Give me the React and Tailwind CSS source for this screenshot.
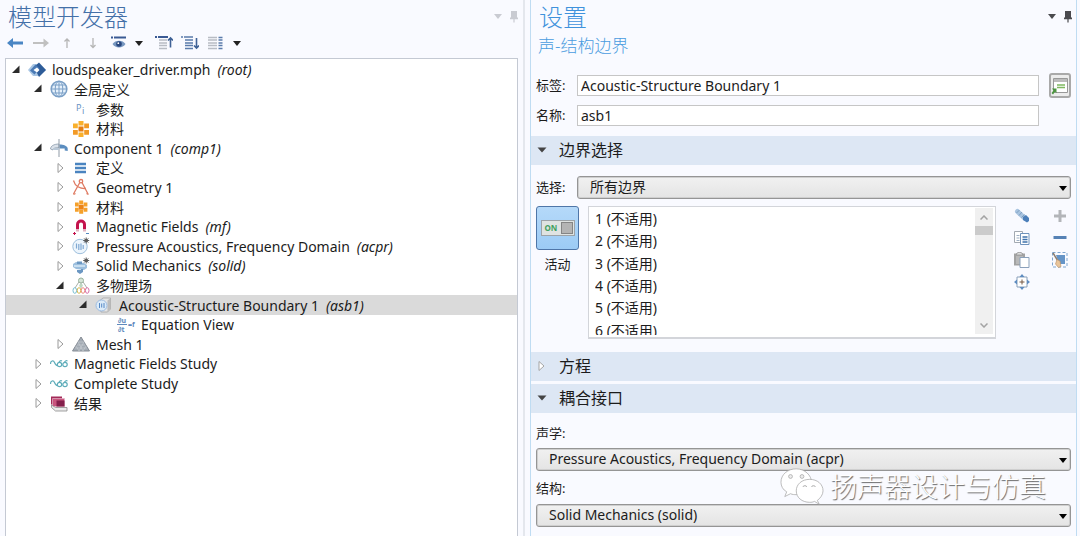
import React, { useState } from 'react'

const GlobeIcon = () => (
    <svg viewBox="0 0 18 18" className="w-full h-full" fill="none" stroke="#7a9fc6">
        <circle cx="9" cy="9" r="7.8" strokeWidth="1.6" fill="#e6f1fb" />
        <ellipse cx="9" cy="9" rx="3.8" ry="7.8" />
        <path d="M9 1v16M1 9h16M2.6 5h12.8M2.6 13h12.8" />
    </svg>
)

const RootIcon = () => (
    <svg viewBox="0 0 18 18" className="w-full h-full">
        <path d="M0 9l5-6h6l7 6-7 6H5z" fill="#a9c6e4" />
        <path d="M6 6l5-4.5L18 9l-7 7z" fill="#2e5c98" />
        <path d="M2 9.500l5.500-6 4 4-5 6z" fill="#4a7ab5" />
        <path d="M5.500 9l3.500-2.500 2.500 2.500L9 11.500z" fill="#fff" />
    </svg>
)

const ParamIcon = () => (
    <svg viewBox="0 0 18 18" className="w-full h-full" fontFamily="Noto Sans, sans-serif" fill="#6a94c4">
        <text x="4" y="11" fontSize="9">P</text>
        <text x="10" y="14" fontSize="9">i</text>
    </svg>
)

const MaterialIcon = () => (
    <svg viewBox="0 0 18 18" className="w-full h-full">
        <path d="M6.500 1h5v4.500h-5zM1 3.500h4.800v4.700H1zM6.500 12.500h5V17h-5z" fill="#f9b02c" />
        <path d="M12.200 3.500H17v4.700h-4.800zM1 10h4.800v4.700H1zM12.200 10H17v4.700h-4.800z" fill="#f29a26" />
        <path d="M6.500 6.500h5v5h-5z" fill="#e57d12" />
    </svg>
)

const SmallMaterialIcon = () => (
    <svg viewBox="0 0 18 18" className="w-full h-full">
        <path d="M7.200 2.500h4v3.800h-4zM3 4.500h3.700v4H3zM7.200 12h4v3.800h-4zM11.700 4.500h3.700v4h-3.700zM3 9.700h3.700v4H3zM11.700 9.700h3.700v4h-3.700z" fill="#f5a02a" />
        <path d="M6.700 6.700h5v5h-5z" fill="#ec8316" />
    </svg>
)

const ComponentIcon = () => (
    <svg viewBox="0 0 18 18" className="w-full h-full">
        <path d="M9 5c-5 0-8.500 2-8.500 5l2.500 1c0-1.500 2-2.500 6-2.500z" fill="#dbe2ea" stroke="#8d9cac" strokeWidth=".8" />
        <path d="M9.500 5.500c4 0 8 1.500 8.200 4V12l-3-.5v-2H9.500z" fill="#5b8dbf" />
        <path d="M9 0v18" stroke="#8f9aa6" />
        <path d="M3 9h6v2H4z" fill="#b8c7d6" />
    </svg>
)

const DefinitionIcon = () => (
    <svg viewBox="0 0 18 18" className="w-full h-full">
        <path d="M3 5h11M3 9h11M3 13h11" stroke="#4a84c0" strokeWidth="2.400" />
    </svg>
)

const GeometryIcon = () => (
    <svg viewBox="0 0 18 18" className="w-full h-full" fill="none" stroke="#df7a62" strokeWidth="1.300">
        <path d="M1.500 16L7.800 4.500M10 4.500L16 16M1.500 2.500C3 8 8 11 14 10.500" />
        <circle cx="9" cy="3.200" r="1.700" />
        <path d="M1.500 16.500l2-1M16.500 16.500l-2-1" />
    </svg>
)

const MagnetIcon = () => (
    <svg viewBox="0 0 18 18" className="w-full h-full">
        <path d="M5.500 13V6.500a3.500 3.500 0 0 1 7 0V13" fill="none" stroke="#c4134d" strokeWidth="3" />
        <path d="M4 11h3v2.500H4zM11 11h3v2.500h-3z" fill="#e3b3c1" />
        <path d="M1 15.500h3M2.500 14v3" stroke="#c4134d" />
        <path d="M14 15.500h3" stroke="#5589c0" />
    </svg>
)

const Star = () => (
    <g>
        <circle cx="14.200" cy="3.500" r="1.800" fill="#555" />
        <path d="M14.200 .500v6M11.200 3.500h6M12.100 1.400l4.200 4.200M16.300 1.400l-4.200 4.200" stroke="#5d5d5d" />
    </g>
)

const AcousticsIcon = () => (
    <svg viewBox="0 0 18 18" className="w-full h-full" fill="none">
        <circle cx="8" cy="9.500" r="7.200" stroke="#9dbfdd" fill="#edf5fc" />
        <path d="M4.500 6.500v5M6.800 7v6M9 6.500v6.500M11.200 8v4" stroke="#7fa8d2" strokeWidth="1.200" />
        <Star />
    </svg>
)

const SolidIcon = () => (
    <svg viewBox="0 0 18 18" className="w-full h-full">
        <path d="M1 7l3-2 8 1 3 2v3l-3 2-8-1-3-2z" fill="#9cbedd" />
        <path d="M5 4.500h5v2.500H5zM5 13h4v-1h2v3l-3 2-3-2z" fill="#6b97c2" />
        <path d="M2 8h11v2H2z" fill="#c9dff0" />
        <Star />
    </svg>
)

const MultiphysicsIcon = () => (
    <svg viewBox="0 0 18 18" className="w-full h-full" fill="none">
        <path d="M8.500 2.500L3 11M9 3v8M9.500 2.500L15 11" stroke="#a8b0a8" />
        <circle cx="9" cy="3.500" r="2.500" fill="#d6e5d8" stroke="#98b29c" />
        <circle cx="9" cy="8.500" r="1.800" fill="#bcd8c2" />
        <ellipse cx="2.800" cy="13.500" rx="1.800" ry="2.800" stroke="#74bdd2" />
        <ellipse cx="7" cy="13.500" rx="1.800" ry="2.800" stroke="#d8b84e" />
        <ellipse cx="11" cy="13.500" rx="1.800" ry="2.800" stroke="#ec8d80" />
        <ellipse cx="15.200" cy="13.500" rx="1.800" ry="2.800" stroke="#d76aa5" />
    </svg>
)

const BoundaryIcon = () => (
    <svg viewBox="0 0 18 18" className="w-full h-full">
        <path d="M5 4.500L8 2h7.500v11l-3 3H6z" fill="#e5e5e5" stroke="#a5a5a5" strokeWidth=".8" />
        <path d="M12.500 4.500L15.500 2v11l-3 3z" fill="#bcbcbc" />
        <circle cx="6.500" cy="9.500" r="5.500" fill="#dcebf8" stroke="#9dbbe0" />
        <path d="M4.500 7v5M6.700 7.500v4M9 7v5" stroke="#5588c6" />
    </svg>
)

const EquationIcon = () => (
    <svg viewBox="0 0 18 18" className="w-full h-full overflow-visible" fontFamily="Noto Sans, sans-serif" fontWeight="700" fill="#5f8abd">
        <text x="1" y="7" fontSize="7">∂u</text>
        <text x="1" y="16" fontSize="7">∂t</text>
        <path d="M0 8.500h10" stroke="#5f8abd" />
        <text x="11" y="11" fontSize="7">=f</text>
    </svg>
)

const MeshIcon = () => (
    <svg viewBox="0 0 18 18" className="w-full h-full">
        <path d="M9 2l8.500 14H.500z" fill="#a3abb4" stroke="#858c95" />
        <path d="M6 7h6M4.500 10h9M3 13h12M6 7l5 9M12 7l-5 9M4 11l3 5M14 11l-3 5" stroke="#c9ced4" strokeWidth=".6" />
    </svg>
)

const StudyIcon = () => (
    <svg viewBox="0 0 18 18" className="w-full h-full" fill="none" stroke="#5fadba" strokeWidth="1.200">
        <path d="M.500 9c0-3.500 3-4 4-1.500s1.500 3.500 3.500 3" />
        <circle cx="9.500" cy="9.500" r="2.200" />
        <circle cx="15" cy="9.500" r="2.200" />
        <path d="M9 7.300c1-1.800 2-1.800 3-1.300M14.500 7.300c.8-1.800 2-1.800 3-1.300" />
    </svg>
)

const ResultsIcon = () => (
    <svg viewBox="0 0 18 18" className="w-full h-full">
        <path d="M1 2.500h11v8H1z" fill="#a32a58" />
        <path d="M2.500 4.500h12v8h-12z" fill="#c8557e" stroke="#e3b4c6" strokeWidth=".7" />
        <path d="M6.500 6.500h8v6h-8z" fill="#84204c" />
        <path d="M1.500 11l4 2.500H17V17H5.500l-4-3.500z" fill="#ececec" stroke="#8b8b8b" strokeWidth=".8" />
    </svg>
)

const nodes = [
    { level: 0, state: 'open', icon: RootIcon, label: 'loudspeaker_driver.mph', tag: '(root)' },
    { level: 1, state: 'open', icon: GlobeIcon, label: '全局定义' },
    { level: 2, icon: ParamIcon, label: '参数' },
    { level: 2, icon: MaterialIcon, label: '材料' },
    { level: 1, state: 'open', icon: ComponentIcon, label: 'Component 1', tag: '(comp1)' },
    { level: 2, state: 'closed', icon: DefinitionIcon, label: '定义' },
    { level: 2, state: 'closed', icon: GeometryIcon, label: 'Geometry 1' },
    { level: 2, state: 'closed', icon: SmallMaterialIcon, label: '材料' },
    { level: 2, state: 'closed', icon: MagnetIcon, label: 'Magnetic Fields', tag: '(mf)' },
    { level: 2, state: 'closed', icon: AcousticsIcon, label: 'Pressure Acoustics, Frequency Domain', tag: '(acpr)' },
    { level: 2, state: 'closed', icon: SolidIcon, label: 'Solid Mechanics', tag: '(solid)' },
    { level: 2, state: 'open', icon: MultiphysicsIcon, label: '多物理场' },
    { level: 3, state: 'open', icon: BoundaryIcon, label: 'Acoustic-Structure Boundary 1', tag: '(asb1)', selected: true },
    { level: 4, icon: EquationIcon, label: 'Equation View' },
    { level: 2, state: 'closed', icon: MeshIcon, label: 'Mesh 1' },
    { level: 1, state: 'closed', icon: StudyIcon, label: 'Magnetic Fields Study' },
    { level: 1, state: 'closed', icon: StudyIcon, label: 'Complete Study' },
    { level: 1, state: 'closed', icon: ResultsIcon, label: '结果' },
]

const indents = ['pl-0.5', 'pl-6', 'pl-[46px]', 'pl-[69px]', 'pl-[91px]']

const Expander = ({ state, label }) => (
    <button type="button" aria-label={label} className="w-4 h-4 shrink-0">
        <svg viewBox="0 0 16 16" className="w-4 h-4">
            {state === 'open'
                ? <path d="M11.500 3.500V11H4z" fill="#2b2b2b" />
                : <path d="M6 3.500v9l5-4.500z" fill="#fff" stroke="#9a9a9a" />}
        </svg>
    </button>
)

const TreeRow = ({ node }) => {
    const Icon = node.icon
    return (
        <li className={`flex items-center min-h-0 ${indents[node.level]} ${node.selected ? 'bg-[#dadada]' : ''}`}>
            {node.state ? <Expander state={node.state} label={node.label} /> : <span className="w-4 shrink-0" />}
            <span className="w-[18px] h-[18px] ml-1 mr-1.5 shrink-0"><Icon /></span>
            <span className="whitespace-nowrap">{node.label}</span>
            {node.tag && <em className="ml-[7px] whitespace-nowrap">{node.tag}</em>}
        </li>
    )
}

const Caret = ({ className }) => (
    <svg viewBox="0 0 8 5" className={`w-2 h-[5px] ${className}`} fill="currentColor"><path d="M0 0h8L4 5z" /></svg>
)

const Pin = () => (
    <svg viewBox="0 0 8 12" className="w-2 h-3" fill="currentColor"><path d="M1 0h6v6.500h1v1.800H4.600v3.200H3.400V8.300H0V6.500h1z" /></svg>
)

const WindowButtons = ({ className }) => (
    <div className={`flex items-center gap-2 ${className}`}>
        <button type="button" aria-label="菜单"><Caret className="block" /></button>
        <button type="button" aria-label="固定"><Pin /></button>
    </div>
)

const Tool = ({ label, wide, children }) => (
    <button type="button" aria-label={label} className={`h-4 shrink-0 ${wide ? 'w-[18px]' : 'w-4'}`}>
        <svg viewBox={wide ? '0 0 18 16' : '0 0 16 16'} className="w-full h-full" fill="none">{children}</svg>
    </button>
)

const Toolbar = () => (
    <div className="flex items-center h-5 pl-[7px]">
        <div className="flex gap-2.5">
            <Tool label="后退"><path d="M0 8l6-5v3.500h10v3H6V13z" fill="#4a86c4" /></Tool>
            <Tool label="前进"><path d="M16 8l-5.500-4.500V7H0v2h10.500v3.500z" fill="#c0c0c0" /></Tool>
            <Tool label="上移"><path d="M8 13V4M5.500 6.500L8 4l2.500 2.500" stroke="#b5b5b5" strokeWidth="1.300" /></Tool>
            <Tool label="下移"><path d="M8 3v9.500M5.500 10L8 12.500l2.500-2.500" stroke="#b5b5b5" strokeWidth="1.300" /></Tool>
            <Tool label="显示">
                <path d="M0 2.500h2M3 2.500h12" stroke="#3a5a94" strokeWidth="2" />
                <path d="M1.500 9C4 4.500 12 4.500 14.500 9 12 13.500 4 13.500 1.500 9z" fill="#7797c0" />
                <circle cx="8" cy="9" r="2.800" fill="#29477e" />
                <circle cx="7.300" cy="8.200" r=".9" fill="#fff" />
            </Tool>
        </div>
        <button type="button" aria-label="显示选项" className="ml-2"><Caret className="text-[#222]" /></button>
        <div className="flex gap-2 ml-3">
            <Tool label="全部折叠" wide>
                <path d="M0 2h2M3 2h10" stroke="#3a5a94" strokeWidth="1.800" />
                <path d="M4 5h8M4 8h8M4 10.500h8M4 13.500h8" stroke="#b8bcc4" strokeWidth="1.500" />
                <path d="M15.500 12.500V3M13 5.500L15.500 3 18 5.500" stroke="#3f6296" strokeWidth="1.600" />
            </Tool>
            <Tool label="全部展开" wide>
                <path d="M0 2h2M3 2h9M4 5h8M4 8h8M4 10.500h8M4 13.500h8" stroke="#5a7bab" strokeWidth="1.600" />
                <path d="M15.500 3v10M13 10.500l2.500 2.500 2.500-2.500" stroke="#3f6296" strokeWidth="1.600" />
            </Tool>
            <Tool label="节点文本" wide>
                <path d="M1 2.500h9M1 5h9M1 8h9M1 10.500h9M1 13.500h9" stroke="#b8bcc4" strokeWidth="1.500" />
                <path d="M11.500 2.500h4M11.500 5h4M11.500 8h4M11.500 10.500h4M11.500 13.500h4" stroke="#5a7bab" strokeWidth="1.500" />
            </Tool>
        </div>
        <button type="button" aria-label="文本选项" className="ml-2"><Caret className="text-[#222]" /></button>
    </div>
)

const ModelBuilder = () => (
    <section className="flex flex-col pl-[5px] pr-[5px] border-r-2 border-[#e4e7ed]">
        <header className="flex items-center justify-between h-[33px] pl-[3px]">
            <h1 className="text-[24px] leading-8 font-light text-[#4470a8]">模型开发器</h1>
            <WindowButtons className="text-[#c9cbd2]" />
        </header>
        <div className="-ml-[5px]"><Toolbar /></div>
        <div className="mt-[5px] grow bg-white border border-b-0 border-[#c4c9d3]">
            <ul className="grid auto-rows-fr h-[354px] pt-px leading-[19px]">
                {nodes.map((node, i) => <TreeRow key={i} node={node} />)}
            </ul>
        </div>
    </section>
)

const SectionHeader = ({ open, children }) => (
    <h2>
        <button type="button" aria-expanded={open} className="flex items-center w-full h-[29px] pl-1.5 pb-px bg-[#dde7f4] text-[16px] leading-6">
            <svg viewBox="0 0 10 10" className="w-2.5 h-2.5 mr-3">
                {open
                    ? <path d="M.500 2.500h9L5 7.500z" fill="#444" />
                    : <path d="M2 .500v9L7 5z" fill="#fff" stroke="#a5a5a5" />}
            </svg>
            {children}
        </button>
    </h2>
)

const Dropdown = ({ id, value }) => (
    <div className="relative grow">
        <select id={id} className="block w-full h-[23px] pl-3 pr-6 pb-px appearance-none rounded-[3px] border border-[#959595] inset-ring inset-ring-[#cfcfcf] bg-linear-to-b from-[#f1f1f1] to-[#e4e4e4] leading-5">
            <option>{value}</option>
        </select>
        <Caret className="absolute right-1 top-2.5 text-black pointer-events-none" />
    </div>
)

const Field = ({ id, label, value }) => (
    <div className="flex items-center">
        <label htmlFor={id} className="w-[41px] text-[13px] whitespace-nowrap">{label}</label>
        <input id={id} defaultValue={value} className="grow min-w-0 h-[21px] pl-[3px] pb-px bg-white border border-[#c6c6c6] leading-[19px]" />
    </div>
)

const SideButton = ({ label, children }) => (
    <button type="button" aria-label={label} className="w-4 h-4">
        <svg viewBox="0 0 16 16" className="w-4 h-4" fill="none">{children}</svg>
    </button>
)

const SelectionTools = () => (
    <div className="flex gap-[22px] mt-0.5 ml-auto mr-[3px]">
        <div className="flex flex-col gap-1.5">
            <SideButton label="创建选择">
                <path d="M3.500 3.500l7 6.500" stroke="#a9c4e0" strokeWidth="5" strokeLinecap="round" />
                <path d="M2.500 5l3-3M5 7.500l3-3.500M7.500 9.500l3-3" stroke="#7f9fc2" />
                <path d="M9 9l3-2 3 3v3l-2 1.500-4-2.500z" fill="#4c7fba" />
            </SideButton>
            <SideButton label="复制选择">
                <path d="M.500 1.500h8v11h-8z" stroke="#a3a9b1" fill="#fff" />
                <path d="M2.500 5.500h3M2.500 8h3M2.500 10.500h3" stroke="#9eafc3" />
                <path d="M6.500 3.500h8.500v11H6.500z" stroke="#6f93bc" fill="#fff" />
                <path d="M8.500 7h5M8.500 9.500h5M8.500 12h5" stroke="#3e71ab" strokeWidth="1.400" />
            </SideButton>
            <SideButton label="粘贴选择">
                <path d="M0 1.500h11v12H0z" fill="#a2a2a2" />
                <path d="M2.500 2.500c0-3 6-3 6 0" stroke="#8c8c8c" fill="#ddd" />
                <path d="M2 4h7v8H2z" fill="#b9b9b9" />
                <path d="M6 5.500h9v10H6z" stroke="#8ba1bb" fill="#fff" />
            </SideButton>
            <SideButton label="缩放到所选">
                <path d="M3 3h10v10H3z" stroke="#8aa0ba" fill="#fff" />
                <path d="M8 5.500v5M5.500 8h5" stroke="#765943" />
                <path d="M8 0l2.500 3h-5zM8 16l2.500-3h-5zM0 8l3-2.500v5zM16 8l-3-2.500v5z" fill="#5f8cc0" />
            </SideButton>
        </div>
        <div className="flex flex-col gap-1.5">
            <SideButton label="添加"><path d="M8 2v12M2 8h12" stroke="#b3b5b9" strokeWidth="3" /></SideButton>
            <SideButton label="移除"><path d="M1.500 7.500h13" stroke="#5682b5" strokeWidth="3" /></SideButton>
            <SideButton label="清除选择">
                <path d="M.500 .500h14.500v14.500H.500z" stroke="#7ea6d0" strokeDasharray="3 2" />
                <path d="M4 3h9v9H7z" fill="#6594c7" />
                <path d="M1 1l5 8" stroke="#8b7d70" strokeWidth="1.500" />
                <path d="M5 7.500l3 1.500 1 5.500-2.500 1L3.500 12z" fill="#e9c59b" stroke="#b58c61" strokeWidth=".6" />
            </SideButton>
        </div>
    </div>
)

const boundaries = [1, 2, 3, 4, 5, 6]

const BoundaryList = () => (
    <div className="flex justify-between grow h-[133px] ml-[9px] pl-1.5 pr-0.5 pt-px pb-[3px] bg-white border border-b-2 border-[#d3d5da] overflow-hidden">
        <div className="h-[127px] overflow-hidden">
            <ul className="grid auto-rows-fr h-[134px] leading-[22px]">
                {boundaries.map((n) => <li key={n}>{n} (不适用)</li>)}
            </ul>
        </div>
        <div className="flex flex-col w-[18px] bg-[#f0f0f0]">
            <button type="button" aria-label="向上滚动" className="h-[18px] flex items-center justify-center">
                <svg viewBox="0 0 8 5" className="w-2 h-[5px]" fill="none" stroke="#a3a3a3" strokeWidth="1.500"><path d="M.500 4.500L4 1l3.500 3.500" /></svg>
            </button>
            <div className="h-[9px] bg-[#cbcbcb]" />
            <button type="button" aria-label="向下滚动" className="mt-auto h-[18px] flex items-center justify-center">
                <svg viewBox="0 0 8 5" className="w-2 h-[5px]" fill="none" stroke="#a3a3a3" strokeWidth="1.500"><path d="M.500 .500L4 4 7.500 .500" /></svg>
            </button>
        </div>
    </div>
)

const ActiveToggle = () => {
    const [active, setActive] = useState(true)
    return (
        <div className="flex flex-col items-center w-[43px] shrink-0">
            <button
                type="button"
                aria-pressed={active}
                aria-labelledby="active-label"
                onClick={() => setActive(!active)}
                className="flex items-center justify-center w-[43px] h-11 rounded-[3px] border border-[#4f76a8] bg-linear-to-b from-[#b5d9f9] to-[#9ccbf5]"
            >
                <span className="flex items-center justify-between w-[34px] h-4 pl-[3px] pr-px border border-[#9da3a8] bg-[#dfe3e2]">
                    <span className="text-[8px] leading-3 font-bold text-[#3fa060]">{active ? 'ON' : 'OFF'}</span>
                    <span className="w-3 h-3 border border-[#858585] bg-[#b4b4b4]" />
                </span>
            </button>
            <span id="active-label" className="mt-1 text-[13px] leading-5">活动</span>
        </div>
    )
}

const Settings = () => (
    <section className="flex flex-col ml-[5px] mr-[3px] min-w-0 border-x border-[#bfdcf2]">
        <header className="flex items-center justify-between h-[33px] pl-2 pr-1">
            <h1 className="text-[24px] leading-8 font-light text-[#3f92dc]">设置</h1>
            <WindowButtons className="text-[#4a4a4e]" />
        </header>
        <p className="pl-[7px] text-[17px] leading-[26px] font-light text-[#4a9ce0]">声-结构边界</p>

        <div className="flex gap-2.5 mt-3.5 pl-[5px] pr-[5px] pb-2.5">
            <div className="flex flex-col gap-[9px] grow mt-0.5">
                <Field id="label" label="标签:" value="Acoustic-Structure Boundary 1" />
                <Field id="name" label="名称:" value="asb1" />
            </div>
            <button type="button" aria-label="转到源" className="flex items-center justify-center w-[22px] h-[25px] rounded-[3px] border-2 border-[#a9a9a9] bg-[#ececec]">
                <svg viewBox="0 0 18 18" className="w-[18px] h-[18px]" fill="none">
                    <path d="M2.500 1.500h14v14h-14z" fill="#fff" stroke="#999" />
                    <path d="M3 2h13v3H3z" fill="#bcbcbc" />
                    <path d="M6 8h8M6 10.500h8" stroke="#7fb960" strokeWidth="1.500" />
                    <path d="M1 11.500h4.500V16L4 14.800 2 17.500.500 16 2.500 13.500z" fill="#4c9540" />
                </svg>
            </button>
        </div>

        <SectionHeader open>边界选择</SectionHeader>
        <div className="flex items-center mt-[11px] pl-[5px] pr-[5px]">
            <label htmlFor="selection" className="w-[41px] text-[13px] whitespace-nowrap">选择:</label>
            <Dropdown id="selection" value="所有边界" />
        </div>
        <div className="flex mt-[7px] pl-[5px] pr-[5px] mb-[13px]">
            <ActiveToggle />
            <BoundaryList />
            <div className="flex w-[75px] shrink-0"><SelectionTools /></div>
        </div>

        <SectionHeader open={false}>方程</SectionHeader>
        <div className="h-[3px]" />
        <SectionHeader open>耦合接口</SectionHeader>
        <div className="flex flex-col pl-[5px] pr-[5px] pt-2.5">
            <label htmlFor="acoustics" className="text-[13px] leading-5 mb-[5px]">声学:</label>
            <Dropdown id="acoustics" value="Pressure Acoustics, Frequency Domain (acpr)" />
            <label htmlFor="structure" className="text-[13px] leading-5 mt-[7px] mb-1.5">结构:</label>
            <Dropdown id="structure" value="Solid Mechanics (solid)" />
        </div>
    </section>
)

const Watermark = () => (
    <div className="absolute right-[34px] bottom-[29px] flex items-center gap-1.5 pointer-events-none">
        <svg viewBox="0 0 46 40" className="w-11 h-10" fill="#fff" stroke="#a8a8a8" strokeWidth=".8">
            <path d="M17 1C8 1 1 7 1 15c0 4 2 8 6 10l-2 5 6-3c2 1 4 1 6 1 9 0 16-6 16-13S26 1 17 1z" />
            <path d="M31 12c-8 0-14 5-14 12s6 12 14 12c2 0 3 0 5-1l5 3-2-4c3-2 6-6 6-10 0-7-6-12-14-12z" />
            <g fill="#ededed">
                <circle cx="11" cy="9" r="2" />
                <circle cx="23" cy="9" r="2" />
                <path d="M24 20c0-2 4-2 4 0M33 20c0-2 4-2 4 0" />
            </g>
        </svg>
        <span className="text-[27px] leading-10 font-light text-white whitespace-nowrap [text-shadow:1px_1px_1px_#666]">扬声器设计与仿真</span>
    </div>
)

const App = () => {
    return (
        <main className="relative grid grid-cols-[525fr_555fr] min-h-screen bg-[#f9faff] text-[14px] text-[#1c1c1c] font-['Noto_Sans','Noto_Sans_CJK_SC',sans-serif]">
            <ModelBuilder />
            <Settings />
            <Watermark />
        </main>
    )
}

export default App
